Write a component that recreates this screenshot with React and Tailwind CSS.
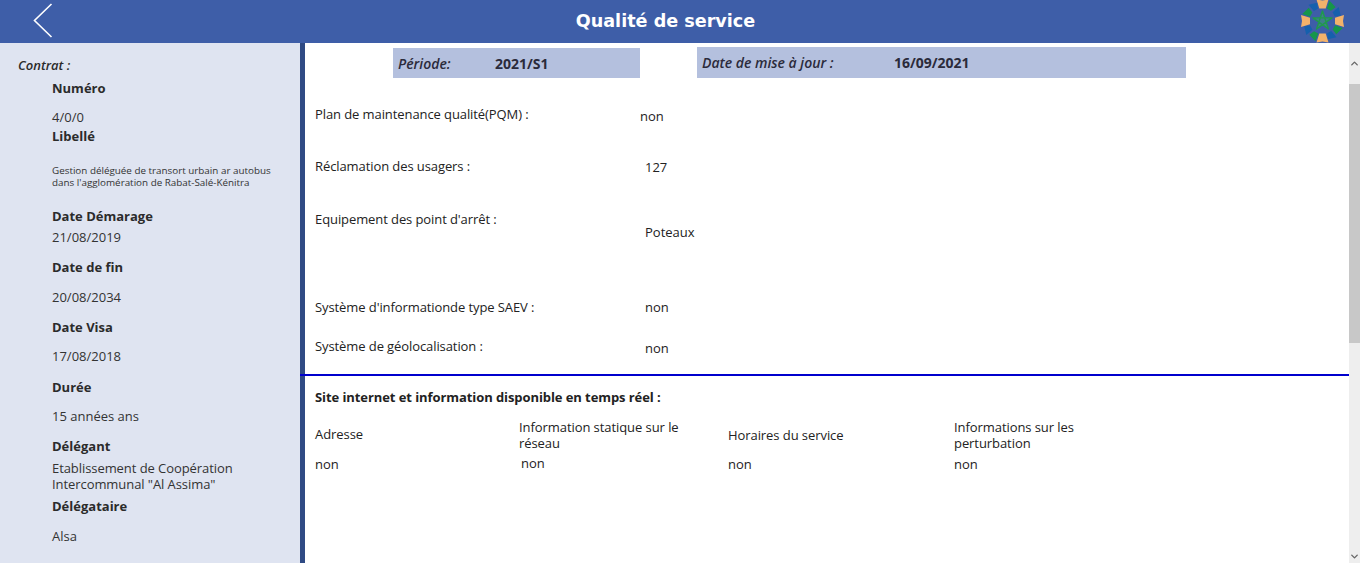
import React from "react";
import { ChevronUp, ChevronDown } from "lucide-react";

function SideLabel({ children, className = "" }) {
  return (
    <div className={`pl-[52px] h-5 leading-5 text-[13px] font-bold text-[#2b2b2b] ${className}`}>
      {children}
    </div>
  );
}

function SideValue({ children, className = "" }) {
  return (
    <div className={`pl-[52px] h-5 leading-5 text-[13px] text-[#333333] ${className}`}>
      {children}
    </div>
  );
}

function Sidebar() {
  return (
    <aside className="w-[305px] shrink-0 bg-[#dfe4f1] border-r-[5px] border-[#2f4a84] pt-[12px] overflow-hidden">
      <div className="pl-[18px] h-5 leading-5 text-[13px] italic font-semibold text-[#2b2b2b]">Contrat :</div>
      <SideLabel className="mt-[3px]">Numéro</SideLabel>
      <SideValue className="mt-[9px]">4/0/0</SideValue>
      <SideLabel className="-mt-[1px]">Libellé</SideLabel>
      <div className="pl-[52px] mt-[18px] text-[9.85px] leading-[12px] text-[#333333] whitespace-nowrap">
        Gestion déléguée de transort urbain ar autobus
        <br />
        dans l'agglomération de Rabat-Salé-Kénitra
      </div>
      <SideLabel className="mt-[18px]">Date Démarage</SideLabel>
      <SideValue className="mt-[1px]">21/08/2019</SideValue>
      <SideLabel className="mt-[10px]">Date de fin</SideLabel>
      <SideValue className="mt-[10px]">20/08/2034</SideValue>
      <SideLabel className="mt-[10px]">Date Visa</SideLabel>
      <SideValue className="mt-[9px]">17/08/2018</SideValue>
      <SideLabel className="mt-[11px]">Durée</SideLabel>
      <SideValue className="mt-[9px]">15 années ans</SideValue>
      <SideLabel className="mt-[10px]">Délégant</SideLabel>
      <div className="pl-[52px] mt-[4px] text-[13px] leading-[16px] tracking-[-0.07px] text-[#333333] whitespace-nowrap">
        Etablissement de Coopération
        <br />
        Intercommunal "Al Assima"
      </div>
      <SideLabel className="mt-[4px]">Délégataire</SideLabel>
      <SideValue className="mt-[10px]">Alsa</SideValue>
    </aside>
  );
}

function Row({ label, value, labelOffset, valueOffset, height }) {
  return (
    <div className={`flex pl-[10px] ${height}`}>
      <div className={`w-[330px] shrink-0 text-[13px] leading-5 tracking-[-0.09px] text-[#222222] ${labelOffset}`}>{label}</div>
      <div className={`text-[13px] leading-5 text-[#222222] ${valueOffset}`}>{value}</div>
    </div>
  );
}

function Scrollbar() {
  return (
    <div className="w-[11px] shrink-0 bg-[#eeeeee] flex flex-col items-center">
      <div className="h-[41px] flex items-center justify-center">
        <ChevronUp size={11} strokeWidth={3} className="text-[#666666]" />
      </div>
      <div className="w-full h-[259px] bg-[#c8c8c8]" />
      <div className="flex-1" />
      <div className="h-[14px] flex items-center justify-center">
        <ChevronDown size={11} strokeWidth={3} className="text-[#666666]" />
      </div>
    </div>
  );
}

function Logo() {
  const petals = [
    { a: 0, fill: "#f3b26b" },
    { a: 30, fill: "#16964a" },
    { a: 60, fill: "#1560ad" },
    { a: 90, fill: "#f3b26b" },
    { a: 120, fill: "#16964a" },
    { a: 150, fill: "#1560ad" },
    { a: 180, fill: "#f3b26b" },
    { a: 210, fill: "#16964a" },
    { a: 240, fill: "#1560ad" },
    { a: 270, fill: "#f3b26b" },
    { a: 300, fill: "#16964a" },
    { a: 330, fill: "#1560ad" },
  ];
  return (
    <svg width="45" height="42" viewBox="-22.5 -21 45 42" className="overflow-visible">
      {petals.map((p) => (
        <path
          key={p.a}
          d={p.fill === "#f3b26b" ? "M-6 -21.5 L0 -20.5 L6 -21.5 L3.2 -12.5 L-3.2 -12.5 Z" : "M-4 -21 L4.5 -18.5 L2.2 -13 L-2.5 -13 Z"}
          fill={p.fill}
          transform={`rotate(${p.a})`}
        />
      ))}
      <path
        d="M0 -10 L5.9 8 L-9.5 -3.1 L9.5 -3.1 L-5.9 8 Z"
        fill="#3e7f8a"
        stroke="#1f9a4c"
        strokeWidth="1.4"
        strokeLinejoin="round"
      />
    </svg>
  );
}

export default function App() {
  return (
    <div className="w-[1360px] h-[563px] flex flex-col overflow-hidden bg-white font-['Open_Sans',sans-serif]">
      <header className="h-[43px] shrink-0 bg-[#3e5ea8] flex items-center relative overflow-hidden">
        <svg width="20" height="35" viewBox="0 0 20 35" className="absolute left-[33px] top-[3px]" fill="none">
          <path d="M18.5 1 L1.5 17.5 L18.5 34" stroke="white" strokeWidth="1.6" />
        </svg>
        <h1 className="w-full text-center text-[17.6px] font-bold text-white font-['DejaVu_Sans',sans-serif] pr-[29px]">
          Qualité de service
        </h1>
        <div className="absolute left-[1300px] top-0">
          <Logo />
        </div>
      </header>
      <div className="flex-1 flex min-h-0">
        <Sidebar />
        <main className="flex-1 min-w-0 relative">
          <div className="flex pt-[4px] h-[35px]">
            <div className="ml-[88px] mt-[1px] w-[247px] h-[30px] bg-[#b4c0de] flex items-center pl-[5px] text-[14px] text-[#2b2b3b]">
              <span className="w-[97px] italic font-semibold">Période:</span>
              <span className="font-bold">2021/S1</span>
            </div>
            <div className="ml-[57px] w-[489px] h-[31px] bg-[#b4c0de] flex items-center pl-[5px] text-[14px] text-[#2b2b3b]">
              <span className="w-[192px] italic font-semibold">Date de mise à jour :</span>
              <span className="font-bold">16/09/2021</span>
            </div>
          </div>
          <Row label="Plan de maintenance qualité(PQM) :" value="non" labelOffset="mt-[26px]" valueOffset="mt-[28px] -ml-[5px]" height="h-[52px]" />
          <Row label="Réclamation des usagers :" value="127" labelOffset="mt-[26px]" valueOffset="mt-[27px]" height="h-[53px]" />
          <Row label="Equipement des point d'arrêt :" value="Poteaux" labelOffset="mt-[26px]" valueOffset="mt-[39px]" height="h-[113px]" />
          <Row label="Système d'informationde type SAEV :" value="non" labelOffset="mt-[1px]" valueOffset="mt-[1px]" height="h-[39px]" />
          <Row label="Système de géolocalisation :" value="non" labelOffset="mt-[1px]" valueOffset="mt-[3px]" height="h-[38px]" />
          <div className="h-[2px] bg-[#0000cd] mr-[11px] -ml-[5px] mt-[1px]" />
          <div className="pl-[10px] mt-[11px] text-[13px] leading-5 font-bold tracking-[-0.08px] text-[#222222]">
            Site internet et information disponible en temps réel :
          </div>
          <div className="grid grid-cols-[204px_209px_226px_1fr] pl-[10px] mt-[12px] text-[13px] leading-4 tracking-[-0.07px] text-[#222222]">
            <div className="self-center pb-[3px]">Adresse</div>
            <div className="w-[180px]">Information statique sur le réseau</div>
            <div className="self-center pb-[1px]">Horaires du service</div>
            <div className="w-[180px]">Informations sur les perturbation</div>
            <div className="mt-[5px]">non</div>
            <div className="mt-[4px] pl-[2px]">non</div>
            <div className="mt-[5px]">non</div>
            <div className="mt-[5px]">non</div>
          </div>
          <div className="absolute right-0 top-0 bottom-0 flex">
            <Scrollbar />
          </div>
        </main>
      </div>
    </div>
  );
}
